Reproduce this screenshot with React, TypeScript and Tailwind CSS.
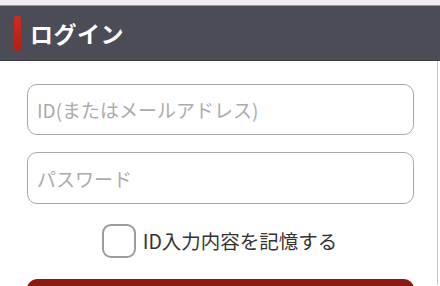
export default function App() {
  return (
    <div
      className="w-[440px] h-[286px] overflow-hidden bg-white"
      style={{ fontFamily: '"Noto Sans CJK JP", "Noto Sans", sans-serif' }}
    >
      {/* top strip */}
      <div className="h-[5px] bg-[#efedf0]" />
      <div className="h-px bg-[#9a9a9e]" />

      {/* header */}
      <div className="flex h-[55px] items-center gap-[9px] border-b border-[#3a3b43] bg-[#4b4c55] pl-[14px]">
        <span className="h-[35px] w-[7px] rounded-[3px] bg-gradient-to-b from-[#d22a1f] to-[#b51e16]" />
        <h1 className="text-[23px] font-bold leading-none tracking-[0.5px] text-white">ログイン</h1>
      </div>

      {/* body */}
      <div className="w-[438px] border-r border-[#c4c4c4] pt-[23px] pl-[27px] pr-[23px] h-[224px]">
        <div className="flex flex-col gap-[17px]">
          <input
            type="text"
            placeholder="ID(またはメールアドレス)"
            className="h-[51px] w-full rounded-[10px] border-[1.5px] border-[#a9a9a9] px-[9px] text-[19px] text-[#333] placeholder:text-[#acacac] outline-none"
          />
          <input
            type="password"
            placeholder="パスワード"
            className="h-[52px] w-full rounded-[10px] border-[1.5px] border-[#a9a9a9] px-[9px] text-[19px] text-[#333] placeholder:text-[#acacac] outline-none"
          />
        </div>

        <label className="mt-[20px] flex items-center justify-center gap-[7px] pr-[2px]">
          <span className="h-[34px] w-[34px] rounded-[9px] border-2 border-[#9c9c9c] bg-white" />
          <span className="text-[19.5px] leading-none text-[#333]">ID入力内容を記憶する</span>
        </label>

        <button className="mt-[21px] h-[40px] w-full rounded-t-[10px] bg-[#8c1a13]" />
      </div>
    </div>
  );
}
